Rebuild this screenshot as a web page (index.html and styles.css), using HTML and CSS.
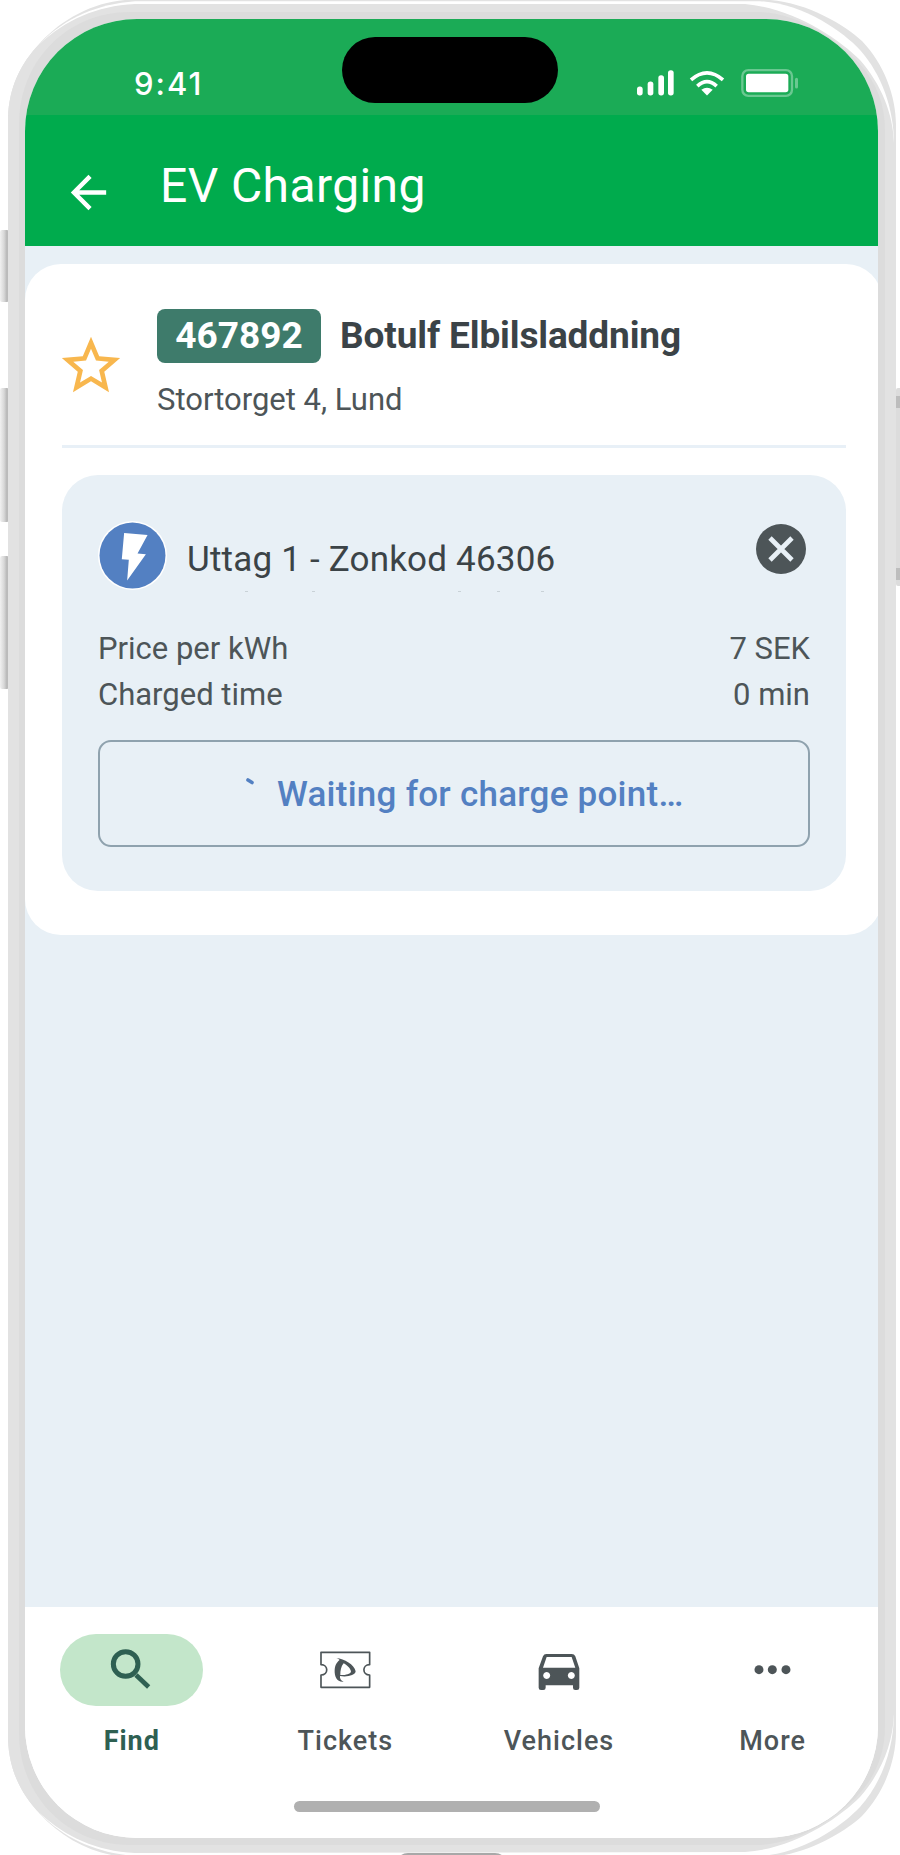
FILE: index.html
```html
<!DOCTYPE html>
<html lang="en">
<head>
<meta charset="utf-8">
<title>EV Charging</title>
<link rel="stylesheet" href="styles.css">
</head>
<body>
<div class="device">
  <svg class="shell" viewBox="0 0 900 1855" aria-hidden="true">
    <defs>
      <linearGradient id="metal" x1="0" x2="1" y1="0" y2="0">
        <stop offset="0" stop-color="#f1f1f1"/>
        <stop offset=".45" stop-color="#d8d8d8"/>
        <stop offset=".8" stop-color="#b4b4b4"/>
        <stop offset="1" stop-color="#dedede"/>
      </linearGradient>
    </defs>
    <g fill="url(#metal)">
      <rect x="0" y="230" width="9" height="72" rx="2"/>
      <rect x="0" y="388" width="9" height="134" rx="2"/>
      <rect x="0" y="556" width="9" height="133" rx="2"/>
    </g>
    <rect x="896" y="388" width="6" height="198" rx="2" fill="#dcdcdc"/>
    <path d="M896 396h4v12h-4zM896 568h4v12h-4z" fill="#bdbdbd"/>
    <!-- outer rim -->
    <path fill="#e2e2e2" d="M8 118C9 88 20 64 40 43C62 19 92 3 125 0H770C808 3 845 25 862 41C884 64 896 96 896 125V1732C896 1761 884 1793 862 1816C845 1832 808 1854 770 1857H125C92 1854 62 1838 40 1814C20 1793 9 1769 8 1739Z"/>
    <!-- highlight between rim and body -->
    <path fill="#fff" d="M40 43.500C66 17 98 4 135 1.200H760C805 4 843 32 860 50C882 75 893.500 108 894 143V1714C893.500 1749 882 1782 860 1807C843 1825 805 1853 760 1856H135C98 1853 66 1840 40 1813.500Z"/>
    <!-- body -->
    <path fill="#e2e2e2" d="M8 118C9 88 20 64 40 43.500C66 20 96 6 135 4H745C793 8 838 38 860 60C881 84 893 113 894 143H896V1714H894C893 1744 881 1773 860 1797C838 1819 793 1849 745 1852L135 1853C96 1851 66 1837 40 1813.500C20 1793 9 1769 8 1739Z"/>
    <path fill="#dcdcdc" d="M19 124C19 62 66 12 130 12H760C800 14 838 40 860 64C877 83 885 106 885 130V1727C885 1751 877 1774 860 1793C838 1817 800 1843 760 1845H130C66 1845 19 1795 19 1733Z"/>
    <path d="M400 1856q3-3 8-3h87q5 0 8 3z" fill="#a8a8a8"/>
  </svg>

  <main class="screen">
    <header class="status">
      <span class="clock">9:41</span>
      <svg class="status-icons" viewBox="560 207 483 83" fill="#fff">
        <rect x="560" y="259" width="17" height="27" rx="8"/>
        <rect x="592" y="244" width="17" height="42" rx="8"/>
        <rect x="624" y="225" width="17" height="61" rx="8"/>
        <rect x="653" y="210" width="17" height="76" rx="8"/>
        <g fill="none" stroke="#fff" stroke-width="11">
          <path d="M722 239Q770 197 818 239"/>
          <path d="M741 258Q770 231 799 258"/>
        </g>
        <path d="M753 269Q770 256 787 269L770 286Z"/>
        <rect x="876" y="210" width="149" height="77" rx="18" fill="none" stroke="#fff" stroke-opacity=".35" stroke-width="7"/>
        <rect x="887" y="221" width="127" height="55" rx="8"/>
        <rect x="1034" y="233" width="9" height="32" rx="4.500" fill-opacity=".35"/>
      </svg>
      <span class="island"></span>
    </header>

    <div class="appbar">
      <svg class="back" viewBox="0 0 24 24"><path fill="none" stroke="#fff" stroke-width="2" d="M20 12H5.400M12.700 4.700 5.400 12l7.300 7.300"/></svg>
      <h1>EV Charging</h1>
    </div>

    <section class="content">
      <article class="card">
        <div class="place">
          <svg class="star" viewBox="0 0 24 24"><path fill="#f8b74e" fill-rule="evenodd" d="M22 9.240l-7.190-.62L12 2 9.190 8.630 2 9.240l5.460 4.730L5.820 21 12 17.270 18.180 21l-1.630-7.030L22 9.240zM12 15.400l-3.760 2.270 1-4.280-3.320-2.880 4.380-.38L12 6.100l1.710 4.040 4.380.38-3.320 2.880 1 4.280L12 15.400z"/></svg>
          <div class="place-text">
            <div class="place-title"><span class="badge">467892</span><h2>Botulf Elbilsladdning</h2></div>
            <p>Stortorget 4, Lund</p>
          </div>
        </div>

        <div class="panel">
          <div class="outlet">
            <svg class="bolt" viewBox="-103 -103 206 206">
              <circle r="103" fill="#fff"/><circle r="98.500" fill="#5380c2"/>
              <path fill="#fff" d="M-25-67 45-61 15-6 40-4-16 75-11 13-32 11Z"/>
            </svg>
            <h3>Uttag 1 - Zonkod 46306</h3>
            <svg class="close" viewBox="2 2 20 20"><circle cx="12" cy="12" r="10" fill="#4d5558"/><path d="m7.600 7.600 8.800 8.800m0-8.800-8.800 8.800" stroke="#e8f0f6" stroke-width="1.900"/></svg>
          </div>
          <svg class="specks" viewBox="0 0 300 2" fill="#c9d2d7"><path d="M0 0h3v1H0zM67 0h3v1h-3zM213 0h3v1h-3zM252 0h3v1h-3zM296 0h3v1h-3z"/></svg>
          <dl class="facts">
            <div><dt>Price per kWh</dt><dd>7 SEK</dd></div>
            <div><dt>Charged time</dt><dd>0 min</dd></div>
          </dl>
          <button class="wait" type="button">
            <svg class="spinner" viewBox="0 0 8 7"><path d="M2 2l4 2.500" stroke="#5380c2" stroke-width="3.600" stroke-linecap="round"/></svg>
            <span>Waiting for charge point…</span>
          </button>
        </div>
      </article>
    </section>

    <nav class="tabs">
      <a class="tab active">
        <span class="tab-icon"><svg viewBox="180 162 429 215" fill="none" stroke="#2e6052"><circle cx="377" cy="252" r="37" stroke-width="15"/><path d="m408 285 38 36" stroke-width="14"/></svg></span>
        <span>Find</span>
      </a>
      <a class="tab">
        <span class="tab-icon"><svg viewBox="821 162 429 215" fill="none" stroke="#4d5558" stroke-width="5"><path stroke-linejoin="round" d="M962 217H1108V254C1085 254 1085 285 1108 285V322H962V285C985 285 985 254 962 254Z"/><path fill="#4d5558" stroke="none" fill-rule="evenodd" d="M1008 234C1032 236 1062 254 1066 274C1065 286 1040 292 1019 288C1018 295 1022 303 1030 305C1010 307 1002 290 1003 270C1004 252 1013 244 1018 240Q1014 236 1008 234ZM1030 250C1022 260 1020 272 1020 285C1033 286 1050 282 1052 275C1051 265 1041 256 1030 250Z"/></svg></span>
        <span>Tickets</span>
      </a>
      <a class="tab">
        <span class="tab-icon"><svg viewBox="111 162 429 215"><path fill="#4d5558" fill-rule="evenodd" d="M289 222H365Q373 222 376 229L388 265V323Q388 330 381 330H376Q369 330 369 323V316H287V323Q287 330 280 330H273Q266 330 266 323V265L279 229Q282 222 289 222ZM290 231 279 263H376L365 231ZM290 276a10.500 10.500 0 1 0 .1 0ZM364 276a10.500 10.500 0 1 0 .1 0Z"/></svg></span>
        <span>Vehicles</span>
      </a>
      <a class="tab">
        <span class="tab-icon"><svg viewBox="754 162 429 215" fill="#4d5558"><circle cx="928" cy="269" r="13.500"/><circle cx="968" cy="269" r="13.500"/><circle cx="1009" cy="269" r="13.500"/></svg></span>
        <span>More</span>
      </a>
    </nav>
    <div class="home"><span></span></div>
  </main>
</div>
</body>
</html>
```
FILE: styles.css
```css
* { box-sizing: border-box; }
body { margin: 0; background: #fff; font-family: Roboto, "Liberation Sans", sans-serif; }
h1, h2, h3, p, dl, dd { margin: 0; }
svg { display: block; flex: none; }

.device {
  position: relative;
  width: 900px;
  height: 1855px;
  padding: 19px 22px 17px 25px;
  overflow: hidden;
}
.shell { position: absolute; inset: 0; width: 900px; height: 1855px; }
.screen {
  position: relative;
  display: flex;
  flex-direction: column;
  width: 853px;
  height: 1819px;
  border-radius: 112px;
  overflow: hidden;
  background: #fff;
}

.status {
  position: relative;
  display: flex;
  align-items: center;
  justify-content: space-between;
  height: 96px;
  padding: 32px 80px 0 109px;
  background: #1bab56;
}
.clock { padding-top: 1px; color: #fff; font: 500 31px/40px Inter, sans-serif; letter-spacing: 2px; }
.status-icons { width: 161px; height: 28px; }
.island {
  position: absolute;
  left: 317px;
  top: 18px;
  width: 216px;
  height: 66px;
  border-radius: 33px;
  background: #000;
}

.appbar {
  display: flex;
  align-items: center;
  gap: 45px;
  height: 131px;
  padding: 11px 37px 0;
  background: #00ab4d;
}
.back { width: 53px; height: 53px; margin-top: 12px; }
.appbar h1 { color: #fff; font-size: 48px; font-weight: 400; line-height: 60px; letter-spacing: .4px; }

.content { flex: 1; padding-top: 18px; background: #e8f0f6; }
.card {
  width: 857px;
  height: 671px;
  padding: 45px 36px 0 37px;
  border-radius: 36px;
  background: #fff;
}
.place {
  display: flex;
  gap: 31px;
  width: 784px;
  height: 139px;
  border-bottom: 3px solid #e8f0f7;
}
.star { width: 70px; height: 70px; margin: 22px 0 0 -6px; }
.place-title { display: flex; align-items: center; gap: 19px; height: 54px; }
.badge {
  width: 164px;
  border-radius: 8px;
  background: #3e7b6b;
  color: #fff;
  font-size: 37px;
  font-weight: 700;
  line-height: 54px;
  text-align: center;
}
.place h2 { color: #3b4347; font-size: 37px; font-weight: 700; line-height: 54px; white-space: nowrap; letter-spacing: -.13px; }
.place p { margin-top: 17px; color: #4d5558; font-size: 31px; line-height: 40px; }

.panel {
  width: 784px;
  height: 416px;
  margin-top: 27px;
  padding: 45px 36px 0 36px;
  border-radius: 36px;
  background: #e8f0f6;
}
.outlet { display: flex; height: 71px; padding-top: 1px; }
.bolt { width: 69px; height: 69px; }
.outlet h3 { margin: 19px auto 0 20px; color: #3b4347; font-size: 35px; font-weight: 400; line-height: 40px; letter-spacing: .2px; }
.close { width: 50px; height: 50px; margin: 3px 4px 0 0; }
.specks { width: 300px; height: 2px; margin: 0 0 0 147px; }
.facts { margin-top: 33px; color: #4d5558; font-size: 31px; line-height: 46px; }
.facts div { display: flex; justify-content: space-between; }
.wait {
  display: flex;
  align-items: flex-start;
  gap: 23px;
  width: 712px;
  height: 107px;
  margin-top: 22px;
  padding: 31px 0 0 146px;
  border: 2px solid #8fa2ae;
  border-radius: 13px;
  background: none;
  color: #5380c2;
  font: 500 35px/44px Roboto, sans-serif;
  letter-spacing: .25px;
}
.spinner { width: 8px; height: 7px; margin-top: 5px; }

.tabs { display: grid; grid-template-columns: repeat(4, 213.6px); height: 160px; padding-top: 27px; background: #fff; }
.tab {
  display: flex;
  flex-direction: column;
  align-items: center;
  gap: 19px;
  color: #4d5558;
  font-size: 27px;
  font-weight: 500;
  line-height: 32px;
  letter-spacing: 1px;
}
.tab-icon { width: 143px; height: 72px; border-radius: 36px; }
.active { color: #2e6052; font-weight: 700; }
.active .tab-icon { background: #c3e6ca; }
.home { display: flex; justify-content: center; height: 71px; padding: 34px 0 0 0; background: #fff; }
.home span { width: 306px; height: 11px; margin-right: 9px; border-radius: 6px; background: #b0b0b0; }
```
